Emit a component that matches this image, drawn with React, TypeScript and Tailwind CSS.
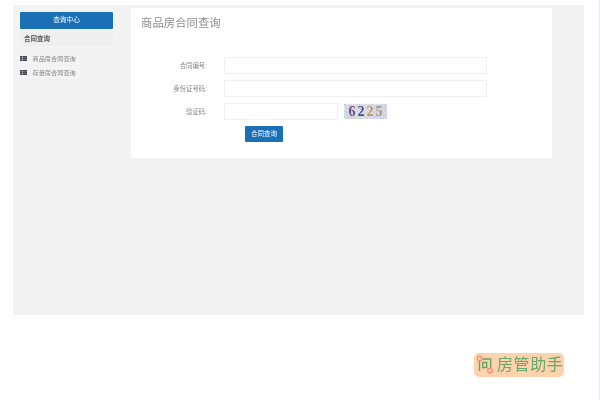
const cjk = { fontFamily: '"Liberation Sans", "Noto Sans CJK SC", sans-serif' };

const menuItems = ['商品房合同查询', '存量房合同查询'];

const fields = [
  { label: '合同编号:', key: 'contract' },
  { label: '身份证号码:', key: 'idcard' },
];

// noise specks behind the captcha digits
const specks = Array.from({ length: 170 }, (_, i) => ({
  x: (i * 17.3) % 43,
  y: (i * 7.9) % 15,
  fill: ['#a9c4c9', '#c6b6d6', '#9fb7a8', '#d6c9a8', '#b0b4d8'][i % 5],
}));

function ListIcon() {
  return (
    <svg className="mb-[1px] h-[5px] w-[7px] shrink-0" viewBox="0 0 7 5" aria-hidden="true">
      <path d="M0 0h2v1.4H0zM2.4 0H7v1.4H2.4zM0 1.8h2v1.4H0zM2.4 1.8H7v1.4H2.4zM0 3.6h2V5H0zM2.4 3.6H7V5H2.4z" fill="#3f4650" />
    </svg>
  );
}

function Captcha() {
  return (
    <div className="relative ml-[6px] h-[15px] w-[43px] bg-[#e2e2ec]">
      <svg className="absolute inset-0 h-full w-full" viewBox="0 0 43 15" aria-hidden="true">
        {specks.map((s, i) => (
          <rect key={i} x={s.x} y={s.y} width="1" height="1" fill={s.fill} />
        ))}
      </svg>
      <div
        className="absolute inset-0 flex items-center justify-center gap-[2px] text-[14px] font-bold leading-none"
        style={{ fontFamily: '"Liberation Serif", serif' }}
      >
        <span className="text-[#6a4f86]">6</span>
        <span className="text-[#3f5290]">2</span>
        <span className="text-[#b59c62]">2</span>
        <span className="text-[#a39484]">5</span>
      </div>
    </div>
  );
}

function Badge() {
  return (
    <div className="absolute left-[474px] top-[353px] flex h-[24px] w-[90px] items-center rounded-[5px] bg-[#fdd3ae] pl-[3px]">
      <svg className="h-[20px] w-[18px] shrink-0" viewBox="0 0 18 20" fill="none" aria-hidden="true">
        <path d="M2.5 4v12M5.7 4H13.7V15M5.7 7.5H9.7V12.5H5.7z" stroke="#62a565" strokeWidth="1.4" />
        <circle cx="2.5" cy="3.5" r="2.3" fill="#fdd3ae" stroke="#f58a6a" strokeWidth="1.3" />
        <circle cx="13" cy="15.5" r="2.3" fill="#fdd3ae" stroke="#f58a6a" strokeWidth="1.3" />
      </svg>
      <span className="ml-[2px] whitespace-nowrap text-[16px] leading-none tracking-[0.6px] text-[#68a86a]">房管助手</span>
    </div>
  );
}

export default function App() {
  return (
    <div className="relative h-[400px] w-[600px] overflow-hidden border-r border-[#ecebf5] bg-white pt-[5px] pl-[13px] blur-[0.3px]" style={cjk}>
      <div className="flex h-[310px] w-[571px] items-start bg-[#f3f3f3]">
        {/* 左侧菜单 */}
        <aside className="ml-[7px] w-[93px] pt-[7px]">
          <div className="flex h-[17px] items-center justify-center rounded-[1px] bg-[#1b6fb5] text-[6.7px] text-white">查询中心</div>
          <div className="mt-[1px] flex h-[16px] items-center bg-[#efefef] pl-[4px] pt-[2px] text-[6.5px] font-bold text-[#555]">合同查询</div>
          <ul className="mt-[6px]">
            {menuItems.map((item) => (
              <li key={item} className="flex h-[14px] items-center gap-[5.5px] border-b border-[#f0f0f0] text-[6.2px] text-[#888]">
                <ListIcon />
                {item}
              </li>
            ))}
          </ul>
        </aside>

        {/* 查询表单 */}
        <main className="ml-[18px] mt-[3px] h-[150px] w-[421px] bg-white">
          <h1 className="pl-[10px] pt-[6px] text-[11.4px] font-normal leading-[18px] text-[#8f8f8f]">商品房合同查询</h1>
          <form className="mt-[25px]">
            {fields.map((f) => (
              <div key={f.key} className="mb-[6px] flex h-[17px] items-center">
                <label className="w-[76px] text-right text-[6.4px] text-[#888]">{f.label}</label>
                <div className="ml-[17px] h-full w-[263px] border border-[#f0f0f0] bg-white" />
              </div>
            ))}
            <div className="flex h-[17px] items-center">
              <label className="w-[76px] text-right text-[6.4px] text-[#888]">验证码:</label>
              <div className="ml-[17px] h-full w-[114px] border border-[#f0f0f0] bg-white" />
              <Captcha />
            </div>
            <button type="button" className="ml-[114px] mt-[6px] flex h-[16px] w-[38px] items-center justify-center rounded-[1px] bg-[#1b6fb5] text-[6.5px] text-white">
              合同查询
            </button>
          </form>
        </main>
      </div>
      <Badge />
    </div>
  );
}
